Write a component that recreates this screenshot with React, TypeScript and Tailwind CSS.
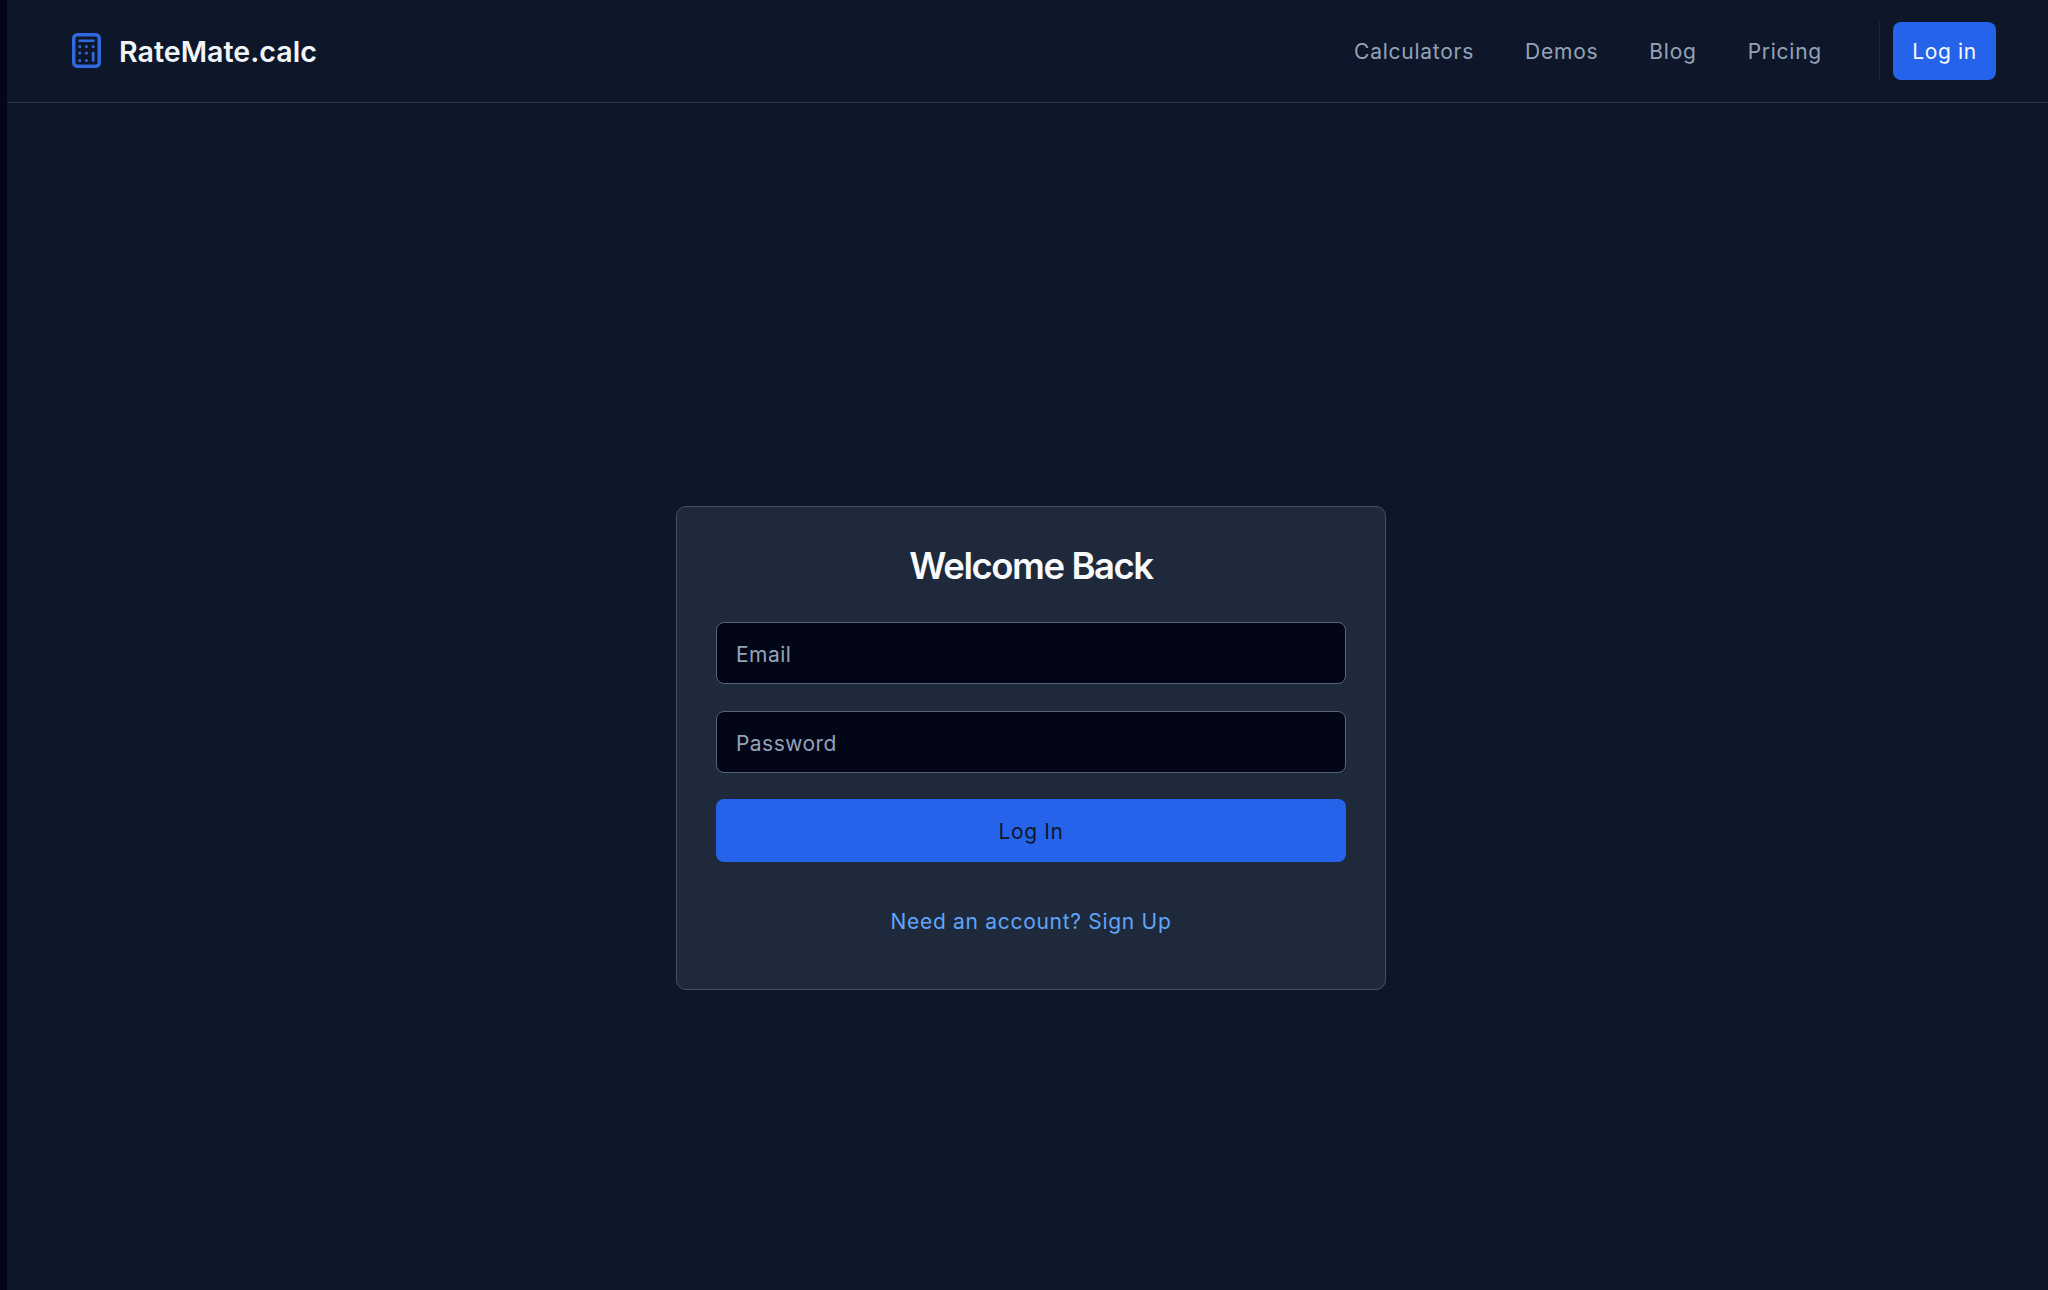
export default function App() {
  const font = { fontFamily: "Inter, 'Liberation Sans', sans-serif" };
  return (
    <div style={font} className="flex min-h-[1290px] bg-[#0e172a]">
      <div className="w-[7px] shrink-0 bg-[#020617]" />
      <div className="flex min-w-0 flex-1 flex-col">
        <header className="flex h-[103px] items-center justify-between border-b border-[#27324a] pl-[65px] pr-[52px]">
          <div className="flex items-center gap-[18px]">
            <svg width="29" height="35" viewBox="0 0 29 35" fill="none" className="mt-[-1px]">
              <rect x="1.75" y="1.75" width="25.5" height="31.5" rx="3.5" stroke="#3069de" strokeWidth="3.5" />
              <rect x="6.5" y="6.5" width="16" height="2.6" fill="#3069de" />
              <g fill="#3069de">
                <rect x="6.4" y="12.2" width="2.7" height="2.7" rx="1" />
                <rect x="13.1" y="12.2" width="2.7" height="2.7" rx="1" />
                <rect x="19.8" y="12.2" width="2.7" height="2.7" rx="1" />
                <rect x="6.4" y="18.8" width="2.7" height="2.7" rx="1" />
                <rect x="13.1" y="18.8" width="2.7" height="2.7" rx="1" />
                <rect x="19.8" y="18.8" width="2.7" height="10" rx="1" />
                <rect x="6.4" y="26.2" width="2.7" height="2.7" rx="1" />
                <rect x="13.1" y="26.2" width="2.7" height="2.7" rx="1" />
              </g>
            </svg>
            <span className="pt-[2px] text-[28.6px] font-semibold leading-none text-[#f1f5f9]">RateMate.calc</span>
          </div>
          <nav className="flex items-center">
            <div className="flex items-center gap-[51px] pt-[2px] text-[21px] tracking-[0.75px] text-[#94a3b8]">
              <a>Calculators</a>
              <a>Demos</a>
              <a>Blog</a>
              <a>Pricing</a>
            </div>
            <div className="ml-[57px] h-[58px] w-px bg-[#1e293b]" />
            <button className="ml-[13px] flex h-[58px] w-[103px] items-center justify-center rounded-[8px] bg-[#2563eb] pt-[2px] text-[21px] tracking-[0.6px] text-[#f8fafc]">
              Log in
            </button>
          </nav>
        </header>
        <main className="flex flex-1 justify-center pl-[7px] pt-[403px]">
          <div className="flex h-[484px] w-[710px] flex-col rounded-[10px] border border-[#435066] bg-[#1e293b] px-[39px] pt-[34px]">
            <h1 className="mb-[31px] text-center text-[36.5px] font-semibold leading-[50px] tracking-[-1.45px] text-[#f8fafc]">
              Welcome Back
            </h1>
            <div className="flex flex-col gap-[27px]">
              <input
                placeholder="Email"
                className="h-[62px] rounded-[8px] border border-[#56647b] bg-[#020617] px-[19px] pt-[2px] text-[21px] tracking-[0.45px] outline-none placeholder:text-[#94a3b8]"
              />
              <input
                placeholder="Password"
                className="h-[62px] rounded-[8px] border border-[#56647b] bg-[#020617] px-[19px] pt-[2px] text-[21px] tracking-[0.45px] outline-none placeholder:text-[#94a3b8]"
              />
              <button className="-mt-px h-[63px] rounded-[8px] bg-[#2563eb] pt-[3px] text-[21px] tracking-[0.6px] text-[#0f172a]">Log In</button>
            </div>
            <a className="mt-[44px] text-center text-[21px] leading-[32px] tracking-[0.7px] text-[#60a5fa]">Need an account? Sign Up</a>
          </div>
        </main>
      </div>
    </div>
  );
}
